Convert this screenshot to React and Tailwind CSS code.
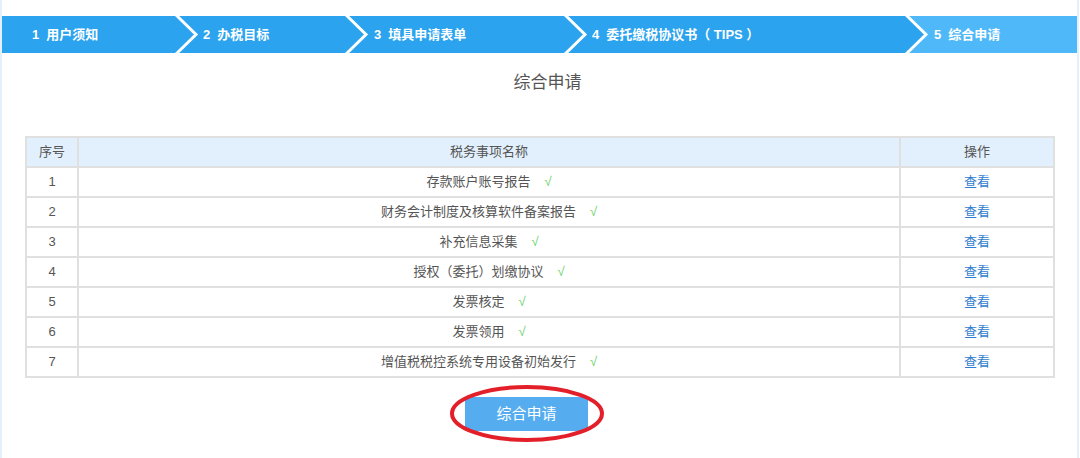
import React from 'react';

const steps = [
  { n: '1', label: '用户须知', w: 'w-[173px]', pl: 'pl-[30px]' },
  { n: '2', label: '办税目标', w: 'w-[144px]', pl: 'pl-[2px]' },
  { n: '3', label: '填具申请表单', w: 'w-[193px]', pl: 'pl-[3px]' },
  { n: '4', label: '委托缴税协议书（ TIPS ）', w: 'w-[315px]', pl: 'pl-[2px]' },
];

const items = [
  '存款账户账号报告',
  '财务会计制度及核算软件备案报告',
  '补充信息采集',
  '授权（委托）划缴协议',
  '发票核定',
  '发票领用',
  '增值税税控系统专用设备初始发行',
];

// 步骤之间的白色折线
const Chevron = ({ lightRight }) => (
  <svg width="26" height="37" viewBox="0 0 26 37" className="shrink-0 block">
    {lightRight && <polygon points="1,0 21,18.5 1,37 26,37 26,0" fill="#4fb8f9" />}
    <polyline points="0,-2 21,18.5 0,39" fill="none" stroke="#ffffff" strokeWidth="3" />
  </svg>
);

const StepText = ({ n, label }) => (
  <span className="flex items-center gap-[7px] text-[13px] font-bold text-white whitespace-nowrap">
    <span>{n}</span>
    <span>{label}</span>
  </span>
);

export default function App() {
  return (
    <div
      className="w-[1080px] h-[458px] bg-white overflow-hidden"
      style={{ fontFamily: '"Liberation Sans", "Noto Sans CJK SC", sans-serif' }}
    >
      <div className="w-[1079px] h-full border-x-2 border-[#e4f0fb] pt-[16px]">
        {/* 步骤条 */}
        <div className="flex h-[37px] bg-[#2ba3ee]">
          {steps.map((s, i) => (
            <React.Fragment key={s.n}>
              <div className={`${s.w} ${s.pl} shrink-0 flex items-center`}>
                <StepText n={s.n} label={s.label} />
              </div>
              <Chevron lightRight={i === steps.length - 1} />
            </React.Fragment>
          ))}
          <div className="flex-1 flex items-center pl-[3px] bg-[#4fb8f9]">
            <StepText n="5" label="综合申请" />
          </div>
        </div>

        {/* 标题 */}
        <div className="mt-[18px] text-center text-[17px] leading-[24px] text-[#555] pl-[16px]">综合申请</div>

        {/* 表格 */}
        <table className="mt-[41px] ml-[23px] w-[1030px] border-collapse text-[13px] text-[#555]">
          <thead>
            <tr className="bg-[#e2f0fd]">
              <th className="w-[52px] h-[30px] border-2 border-[#e0e0e0] font-normal p-0">序号</th>
              <th className="h-[30px] border-2 border-[#e0e0e0] font-normal p-0">税务事项名称</th>
              <th className="w-[154px] h-[30px] border-2 border-[#e0e0e0] font-normal p-0">操作</th>
            </tr>
          </thead>
          <tbody>
            {items.map((name, i) => (
              <tr key={name}>
                <td className="h-[30px] border-2 border-[#e0e0e0] text-center p-0">{i + 1}</td>
                <td className="h-[30px] border-2 border-[#e0e0e0] text-center p-0">
                  {name}
                  <span className="ml-[14px] text-[#66d266]">√</span>
                </td>
                <td className="h-[30px] border-2 border-[#e0e0e0] text-center p-0">
                  <a className="text-[#2f7dcf] cursor-pointer">查看</a>
                </td>
              </tr>
            ))}
          </tbody>
        </table>

        {/* 按钮 */}
        <div className="mt-[19px] flex justify-center pr-[26px]">
          <div className="relative">
            <button className="w-[123px] h-[34px] bg-[#55adf0] text-white text-[15px]">综合申请</button>
            <svg
              width="154"
              height="57"
              viewBox="0 0 154 57"
              className="absolute left-[-15px] top-[-12px] pointer-events-none"
            >
              <ellipse cx="77" cy="28.5" rx="75" ry="26.5" fill="none" stroke="#e3202a" strokeWidth="4" />
            </svg>
          </div>
        </div>
      </div>
    </div>
  );
}
